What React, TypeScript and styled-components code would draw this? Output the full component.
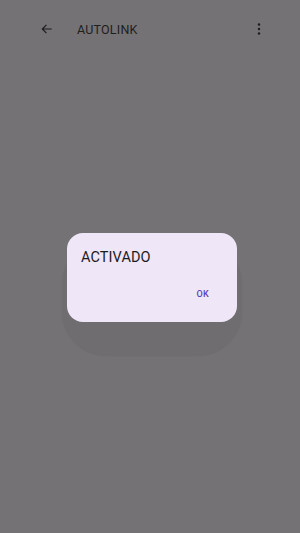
import { createGlobalStyle, styled } from "styled-components";

const Global = createGlobalStyle`
  html, body {
    margin: 0;
    padding: 0;
    background: #747274;
  }
  body {
    font-family: Roboto, "Noto Sans", sans-serif;
  }
`;

const Screen = styled.div`
  width: 300px;
  height: 533px;
  background: #747274;
  display: flex;
  flex-direction: column;
  overflow: hidden;
`;

const Toolbar = styled.div`
  height: 58px;
  display: flex;
  align-items: center;
  padding: 0 30px 0 36px;
  color: #1c1b1f;
`;

const IconButton = styled.div`
  width: 22px;
  height: 22px;
  display: flex;
  align-items: center;
  justify-content: center;
`;

const Title = styled.div`
  flex: 1;
  margin-left: 19px;
  font-size: 12.5px;
  letter-spacing: 0.2px;
  color: #1f1e21;
`;

const Stage = styled.div`
  position: relative;
  display: flex;
  justify-content: center;
  padding-top: 175px;
  padding-left: 4px;
`;

const Backdrop = styled.div`
  position: absolute;
  top: 182px;
  left: 62px;
  width: 180px;
  height: 115px;
  border-radius: 44px;
  background: #6f6d70;
  box-shadow: 0 1px 2px rgba(0, 0, 0, 0.06);
`;

const Dialog = styled.div`
  position: relative;
  width: 170px;
  height: 89px;
  border-radius: 16px;
  background: #efe6f7;
  box-sizing: border-box;
  padding: 16px 14px 0 14px;
  display: flex;
  flex-direction: column;
`;

const DialogTitle = styled.div`
  font-size: 14.5px;
  color: #1c1b1f;
  letter-spacing: 0.1px;
`;

const Actions = styled.div`
  display: flex;
  justify-content: flex-end;
  margin-top: 23px;
  padding-right: 14px;
`;

const TextButton = styled.div`
  font-size: 9px;
  font-weight: 500;
  color: #5b41c1;
  letter-spacing: 0.3px;
`;

export default function App() {
  return (
    <>
      <Global />
      <Screen>
        <Toolbar>
          <IconButton>
            <svg width="14" height="14" viewBox="0 0 24 24" fill="none" stroke="#1c1b1f" strokeWidth="2">
              <path d="M20 12H4M11 5l-7 7 7 7" />
            </svg>
          </IconButton>
          <Title>AUTOLINK</Title>
          <IconButton>
            <svg width="4" height="12" viewBox="0 0 4 12" fill="#1c1b1f">
              <circle cx="2" cy="1.5" r="1.2" />
              <circle cx="2" cy="6" r="1.2" />
              <circle cx="2" cy="10.5" r="1.2" />
            </svg>
          </IconButton>
        </Toolbar>
        <Stage>
          <Backdrop />
          <Dialog>
            <DialogTitle>ACTIVADO</DialogTitle>
            <Actions>
              <TextButton>OK</TextButton>
            </Actions>
          </Dialog>
        </Stage>
      </Screen>
    </>
  );
}
